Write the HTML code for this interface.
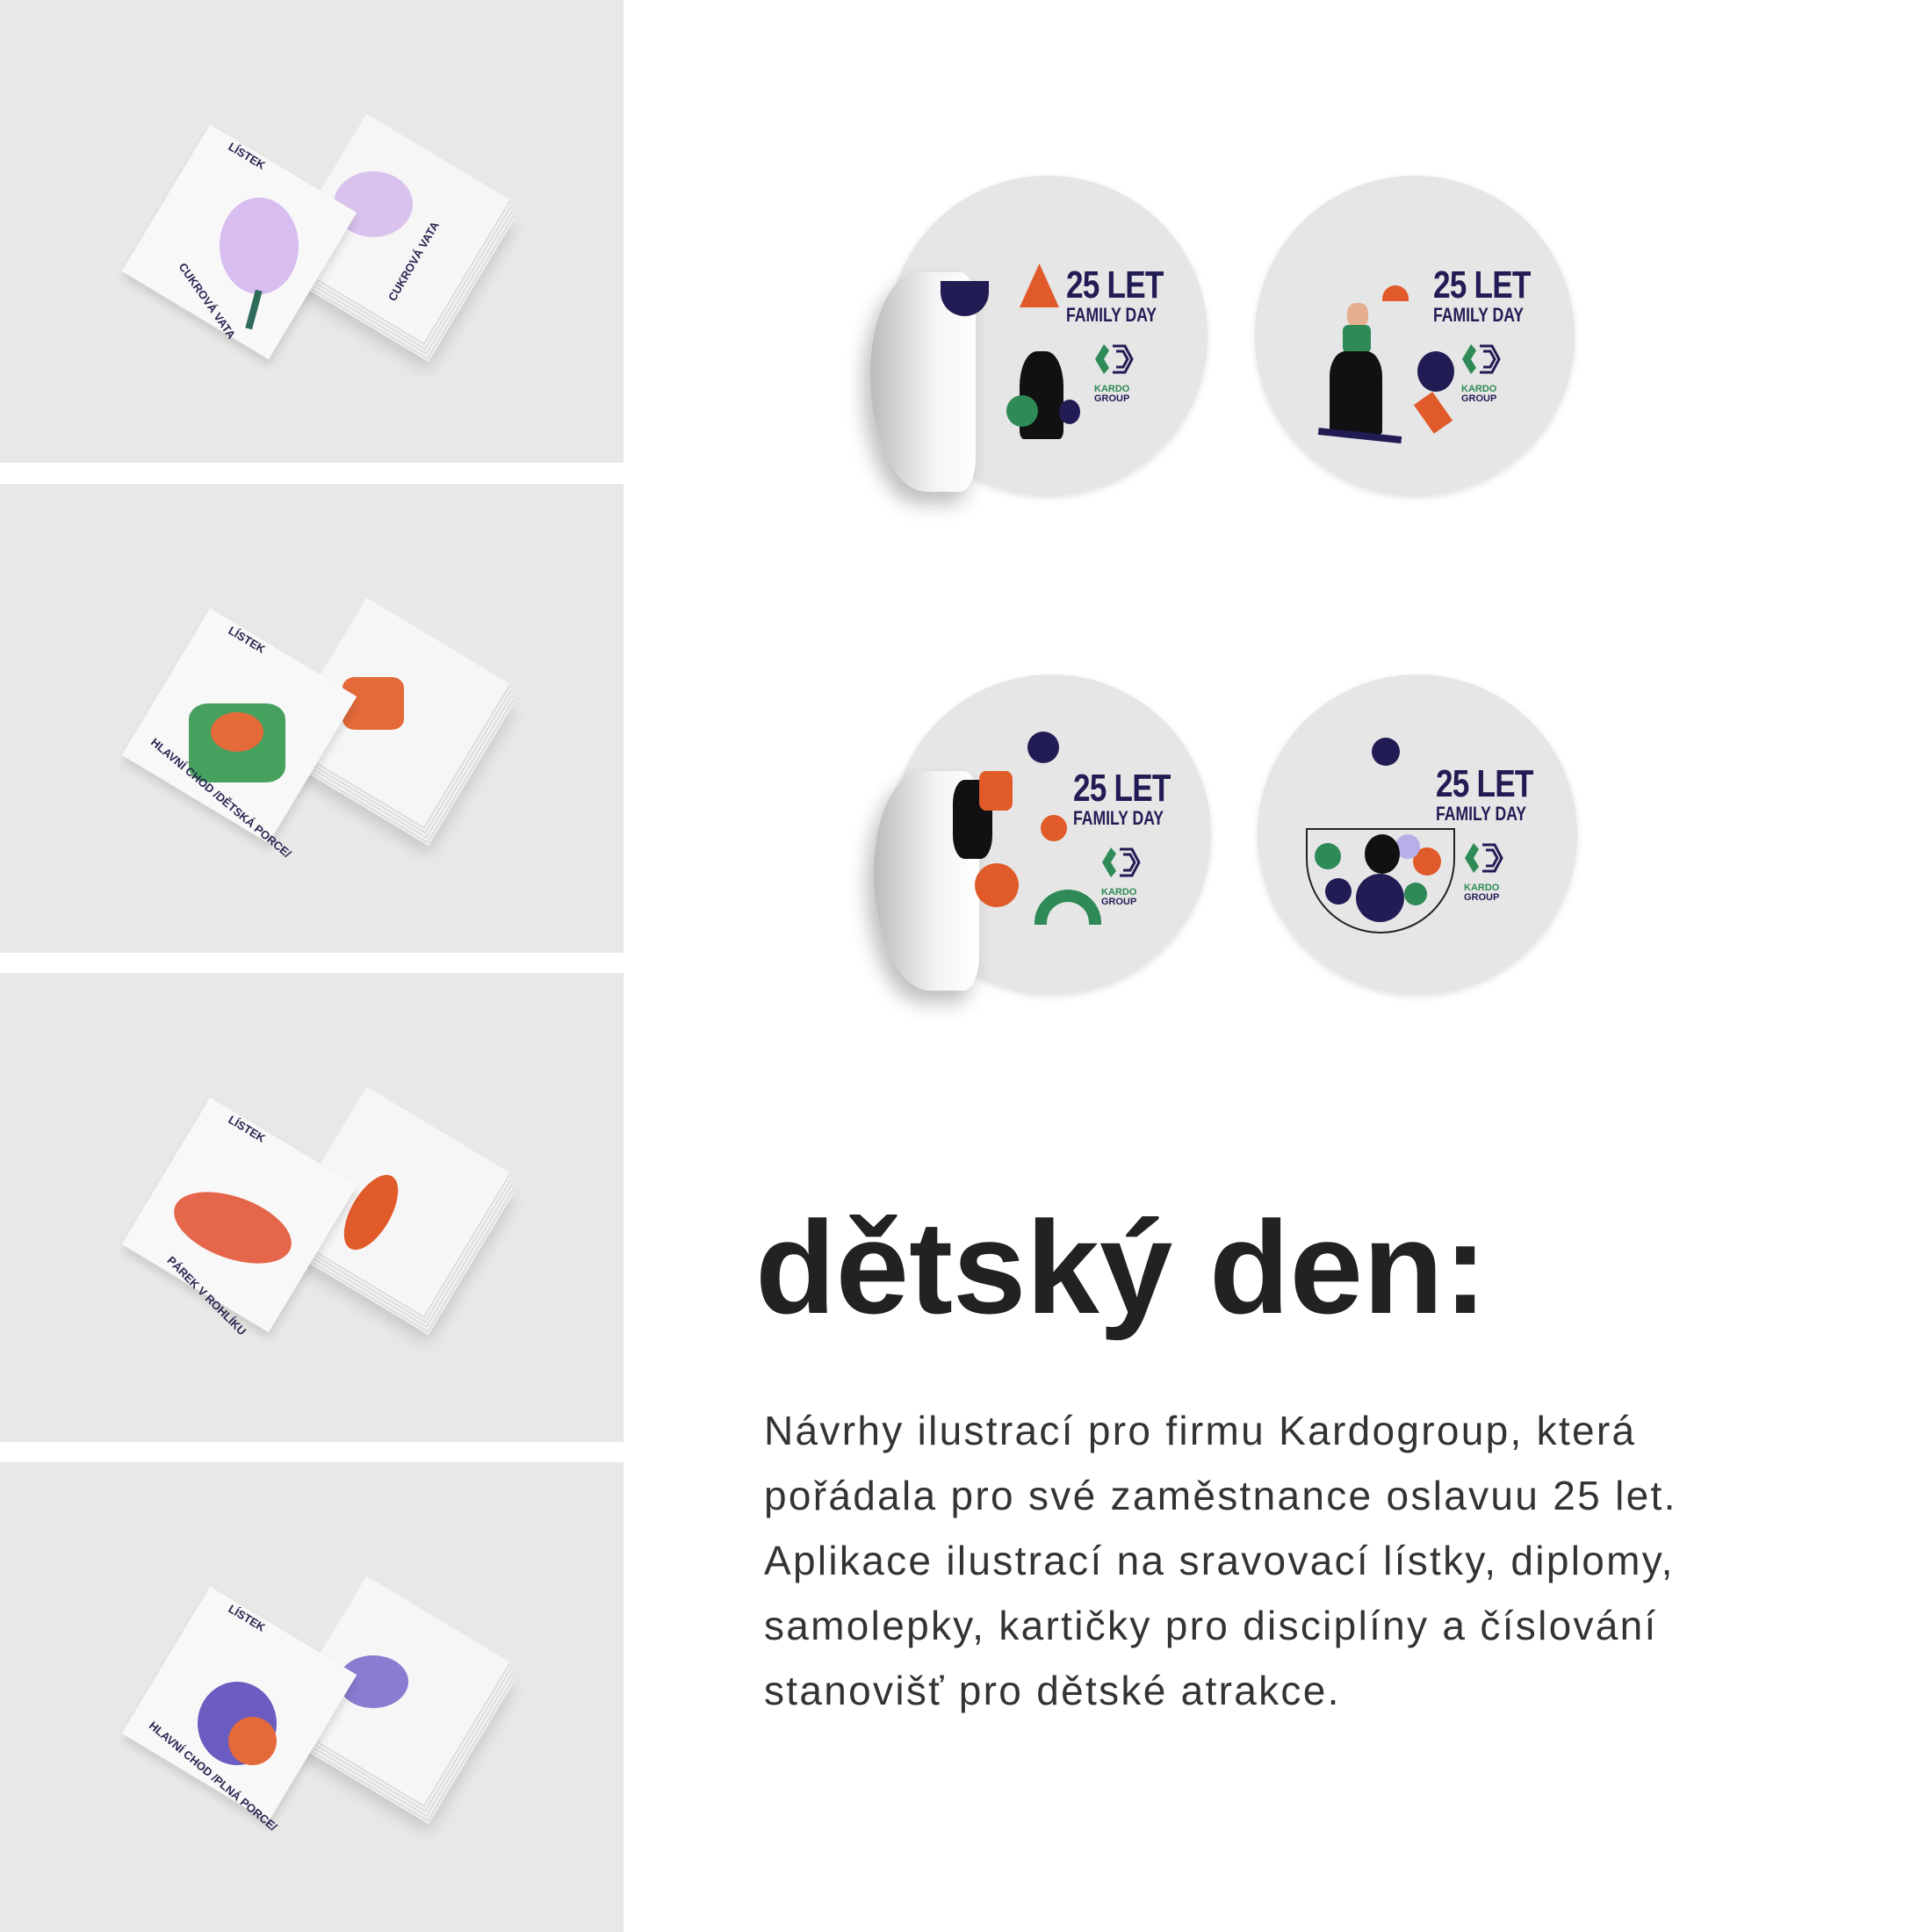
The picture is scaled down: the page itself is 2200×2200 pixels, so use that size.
<!DOCTYPE html>
<html><head><meta charset="utf-8">
<style>
*{margin:0;padding:0;box-sizing:border-box}
html,body{width:2200px;height:2200px;background:#fff;overflow:hidden;font-family:"Liberation Sans",sans-serif}
.panel{position:absolute;left:0;width:710px;background:#e8e8e7;overflow:hidden}
.card{position:absolute;width:195px;height:195px;background:#f8f8f8;transform:rotate(31deg);box-shadow:4px 6px 10px rgba(0,0,0,.12)}
.stack{position:absolute;width:190px;height:190px;background:#f6f6f6;transform:rotate(31deg);
 box-shadow:2px 2px 0 #ddd,4px 4px 0 #f4f4f4,6px 6px 0 #ddd,8px 8px 0 #f4f4f4,10px 10px 0 #ddd,12px 12px 0 #f4f4f4,14px 14px 0 #ddd,16px 16px 0 #eee,20px 24px 18px rgba(0,0,0,.15)}
.lbl{position:absolute;font-family:"Liberation Sans Narrow","Liberation Sans",sans-serif;font-weight:bold;color:#2a2550;font-size:13px;white-space:nowrap}
.blob{position:absolute;border-radius:50%}
.st{position:absolute;width:364px;height:364px;border-radius:50%;background:#e6e6e6;box-shadow:0 3px 8px rgba(0,0,0,.12)}
.st .t1{position:absolute;left:203px;top:100px;font-family:"Liberation Sans Narrow","Liberation Sans",sans-serif;font-weight:bold;color:#221c55;font-size:44px;letter-spacing:-1px;transform:scaleX(.8);transform-origin:left}
.st .t2{position:absolute;left:203px;top:146px;font-family:"Liberation Sans Narrow","Liberation Sans",sans-serif;font-weight:bold;color:#221c55;font-size:22px;transform:scaleX(.8);transform-origin:left}
.st .k{position:absolute;left:232px;top:184px;width:50px;height:50px}
.st .kt{position:absolute;left:235px;top:238px;font-size:11px;line-height:11px;font-weight:bold;text-align:center}
.curl{position:absolute;left:-20px;top:110px;width:120px;height:250px;background:linear-gradient(90deg,#bbb,#f4f4f4 60%,#fff);border-radius:60% 20% 20% 70%;box-shadow:-8px 14px 22px rgba(0,0,0,.25)}
h1{position:absolute;left:860px;top:1357px;font-size:150px;font-weight:bold;color:#222;letter-spacing:0px}
p{position:absolute;left:870px;top:1592px;font-size:46px;line-height:74px;color:#333;white-space:nowrap;letter-spacing:2.3px}
</style></head><body>

<div class="panel" style="top:0;height:527px">
 <div class="stack" style="left:355px;top:165px"></div>
 <div class="blob" style="left:380px;top:195px;width:90px;height:75px;background:#d9c3ee"></div>
 <div class="lbl" style="left:420px;top:290px;transform:rotate(-60deg)">CUKROVÁ VATA</div>
 <div class="card" style="left:175px;top:178px"></div>
 <div class="blob" style="left:250px;top:225px;width:90px;height:110px;background:#d7bdf0"></div>
 <div style="position:absolute;left:285px;top:330px;width:8px;height:45px;background:#2f6b5a;transform:rotate(15deg)"></div>
 <div class="lbl" style="left:258px;top:170px;transform:rotate(31deg)">LÍSTEK</div>
 <div class="lbl" style="left:185px;top:335px;transform:rotate(55deg)">CUKROVÁ VATA</div>
</div>

<div class="panel" style="top:551px;height:534px">
 <div class="stack" style="left:355px;top:165px"></div>
 <div class="blob" style="left:390px;top:220px;width:70px;height:60px;background:#e46a3a;border-radius:20%"></div>
 <div class="card" style="left:175px;top:178px"></div>
 <div class="blob" style="left:215px;top:250px;width:110px;height:90px;background:#46a05e;border-radius:20%"></div>
 <div class="blob" style="left:240px;top:260px;width:60px;height:45px;background:#e46a3a"></div>
 <div class="lbl" style="left:258px;top:170px;transform:rotate(31deg)">LÍSTEK</div>
 <div class="lbl" style="left:150px;top:350px;transform:rotate(40deg)">HLAVNÍ CHOD /DĚTSKÁ PORCE/</div>
</div>

<div class="panel" style="top:1108px;height:534px">
 <div class="stack" style="left:355px;top:165px"></div>
 <div class="blob" style="left:400px;top:225px;width:45px;height:95px;background:#e15b2a;transform:rotate(30deg)"></div>
 <div class="card" style="left:175px;top:178px"></div>
 <div class="blob" style="left:195px;top:255px;width:140px;height:70px;background:#e5664a;transform:rotate(20deg)"></div>
 <div class="lbl" style="left:258px;top:170px;transform:rotate(31deg)">LÍSTEK</div>
 <div class="lbl" style="left:175px;top:360px;transform:rotate(45deg)">PÁREK V ROHLÍKU</div>
</div>

<div class="panel" style="top:1665px;height:535px">
 <div class="stack" style="left:355px;top:165px"></div>
 <div class="blob" style="left:385px;top:220px;width:80px;height:60px;background:#8a7cd1"></div>
 <div class="card" style="left:175px;top:178px"></div>
 <div class="blob" style="left:225px;top:250px;width:90px;height:95px;background:#6a5cc0"></div>
 <div class="blob" style="left:260px;top:290px;width:55px;height:55px;background:#e46a3a"></div>
 <div class="lbl" style="left:258px;top:170px;transform:rotate(31deg)">LÍSTEK</div>
 <div class="lbl" style="left:150px;top:350px;transform:rotate(40deg)">HLAVNÍ CHOD /PLNÁ PORCE/</div>
</div>

<div class="st" style="left:1011px;top:200px">
 <div class="curl"></div>
 <div class="blob" style="left:150px;top:200px;width:50px;height:100px;background:#111;border-radius:40% 40% 10% 10%"></div>
 <div class="blob" style="left:60px;top:120px;width:55px;height:40px;background:#221c55;border-radius:0 0 40px 40px"></div>
 <div class="blob" style="left:150px;top:100px;width:45px;height:50px;background:#e15b2a;border-radius:0;clip-path:polygon(50% 0,100% 100%,0 100%)"></div>
 <div class="blob" style="left:135px;top:250px;width:36px;height:36px;background:#2e8a56"></div>
 <div class="blob" style="left:195px;top:255px;width:24px;height:28px;background:#221c55"></div>
 <div class="t1">25 LET</div><div class="t2">FAMILY DAY</div>
 <svg class="k" viewBox="0 0 50 50"><path d="M14 8 L4 25 L14 42 L20 35 L14 25 L20 15Z" fill="#2e8a56"/><path d="M24 10h14l8 15-8 15H24M28 16h8l5 9-5 9h-8" fill="none" stroke="#221c55" stroke-width="3"/></svg>
 <div class="kt"><span style="color:#2e8a56">KARDO</span><br><span style="color:#221c55">GROUP</span></div>
</div>

<div class="st" style="left:1429px;top:200px">
 <div class="blob" style="left:105px;top:145px;width:24px;height:28px;background:#e5b090;border-radius:40%"></div>
 <div class="blob" style="left:100px;top:170px;width:32px;height:32px;background:#2e8a56;border-radius:20%"></div>
 <div class="blob" style="left:85px;top:200px;width:60px;height:95px;background:#111;border-radius:30% 30% 5% 5%"></div>
 <div style="position:absolute;left:72px;top:292px;width:95px;height:8px;background:#221c55;transform:rotate(6deg)"></div>
 <div class="blob" style="left:185px;top:200px;width:42px;height:46px;background:#221c55"></div>
 <div class="blob" style="left:190px;top:250px;width:26px;height:40px;background:#e15b2a;border-radius:0;transform:rotate(-35deg)"></div>
 <div class="blob" style="left:145px;top:125px;width:30px;height:18px;background:#e15b2a;border-radius:30px 30px 0 0"></div>
 <div class="t1">25 LET</div><div class="t2">FAMILY DAY</div>
 <svg class="k" viewBox="0 0 50 50"><path d="M14 8 L4 25 L14 42 L20 35 L14 25 L20 15Z" fill="#2e8a56"/><path d="M24 10h14l8 15-8 15H24M28 16h8l5 9-5 9h-8" fill="none" stroke="#221c55" stroke-width="3"/></svg>
 <div class="kt"><span style="color:#2e8a56">KARDO</span><br><span style="color:#221c55">GROUP</span></div>
</div>

<div class="st" style="left:1015px;top:768px">
 <div class="curl"></div>
 <div class="blob" style="left:70px;top:120px;width:45px;height:90px;background:#111;border-radius:30%"></div>
 <div class="blob" style="left:100px;top:110px;width:38px;height:45px;background:#e15b2a;border-radius:20%"></div>
 <div class="blob" style="left:95px;top:215px;width:50px;height:50px;background:#e15b2a"></div>
 <div class="blob" style="left:155px;top:65px;width:36px;height:36px;background:#221c55"></div>
 <div class="blob" style="left:170px;top:160px;width:30px;height:30px;background:#e15b2a"></div>
 <div style="position:absolute;left:163px;top:245px;width:76px;height:40px;border:14px solid #2e8a56;border-bottom:none;border-radius:40px 40px 0 0"></div>
 <div class="t1" style="left:207px;top:105px">25 LET</div><div class="t2" style="left:207px;top:151px">FAMILY DAY</div>
 <svg class="k" style="left:236px;top:189px" viewBox="0 0 50 50"><path d="M14 8 L4 25 L14 42 L20 35 L14 25 L20 15Z" fill="#2e8a56"/><path d="M24 10h14l8 15-8 15H24M28 16h8l5 9-5 9h-8" fill="none" stroke="#221c55" stroke-width="3"/></svg>
 <div class="kt" style="left:239px;top:243px"><span style="color:#2e8a56">KARDO</span><br><span style="color:#221c55">GROUP</span></div>
</div>

<div class="st" style="left:1432px;top:768px">
 <div style="position:absolute;left:55px;top:175px;width:170px;height:120px;border:2px solid #222;border-radius:0 0 85px 85px;overflow:hidden">
  <div class="blob" style="left:55px;top:50px;width:55px;height:55px;background:#221c55"></div>
  <div class="blob" style="left:8px;top:15px;width:30px;height:30px;background:#2e8a56"></div>
  <div class="blob" style="left:120px;top:20px;width:32px;height:32px;background:#e15b2a"></div>
  <div class="blob" style="left:20px;top:55px;width:30px;height:30px;background:#221c55"></div>
  <div class="blob" style="left:100px;top:5px;width:28px;height:28px;background:#b7b0e8"></div>
  <div class="blob" style="left:65px;top:5px;width:40px;height:45px;background:#111"></div>
  <div class="blob" style="left:110px;top:60px;width:26px;height:26px;background:#2e8a56"></div>
 </div>
 <div class="blob" style="left:130px;top:72px;width:32px;height:32px;background:#221c55"></div>
 <div class="t1" style="left:203px;top:100px">25 LET</div><div class="t2" style="left:203px;top:146px">FAMILY DAY</div>
 <svg class="k" viewBox="0 0 50 50"><path d="M14 8 L4 25 L14 42 L20 35 L14 25 L20 15Z" fill="#2e8a56"/><path d="M24 10h14l8 15-8 15H24M28 16h8l5 9-5 9h-8" fill="none" stroke="#221c55" stroke-width="3"/></svg>
 <div class="kt"><span style="color:#2e8a56">KARDO</span><br><span style="color:#221c55">GROUP</span></div>
</div>

<h1>dětský den:</h1>
<p>Návrhy ilustrací pro firmu Kardogroup, která<br>pořádala pro své zaměstnance oslavuu 25 let.<br>Aplikace ilustrací na sravovací lístky, diplomy,<br>samolepky, kartičky pro disciplíny a číslování<br>stanovišť pro dětské atrakce.</p>
</body></html>
